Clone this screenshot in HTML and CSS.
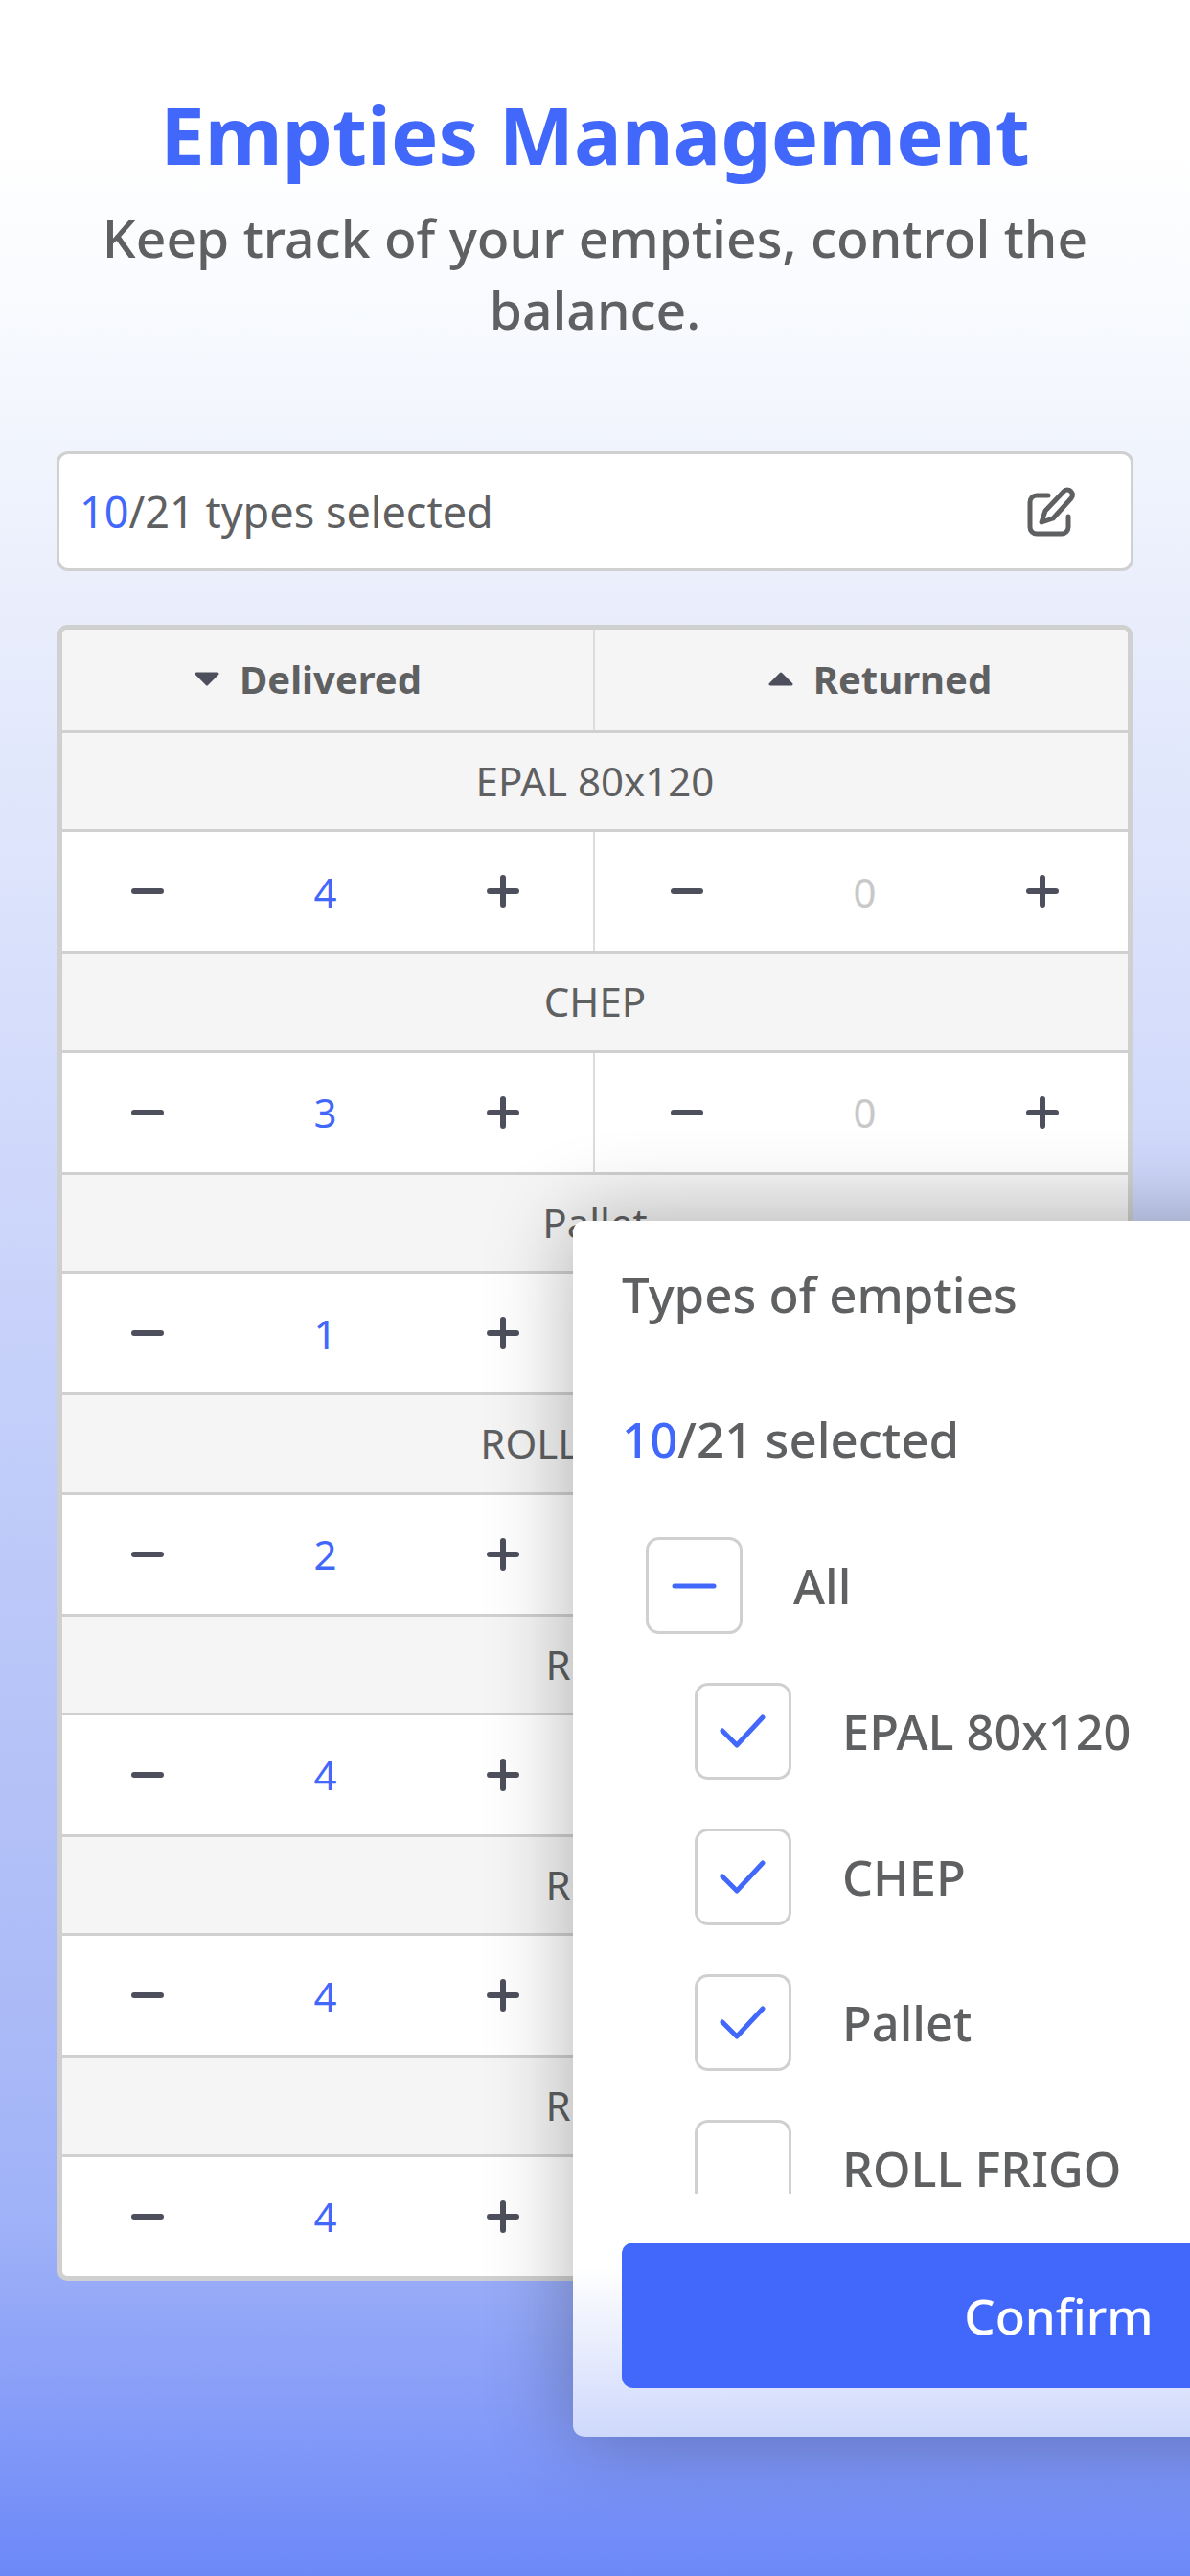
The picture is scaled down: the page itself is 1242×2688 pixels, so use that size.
FILE: index.html
```html
<!DOCTYPE html>
<html lang="en">
<head>
    <meta charset="UTF-8">
    <meta name="viewport" content="width=device-width, initial-scale=1.0">
    <title>Empties Management</title>
    <link rel="stylesheet" href="styles.css">
</head>
<body>

<svg class="icon-defs" width="0" height="0">
    <symbol id="minus" viewBox="0 0 40 40"><path d="M6 20H34" /></symbol>
    <symbol id="plus" viewBox="0 0 40 40"><path d="M6 20H34M20 6V34" /></symbol>
</svg>

<div class="page">
    <h1 class="title">Empties Management</h1>
    <p class="subtitle">Keep track of your empties, control the balance.</p>

    <div class="types-bar">
        <span><span class="blue">10</span>/21 types selected</span>
        <svg class="edit-icon" viewBox="0 0 56 56">
            <path d="M22 11H10a7 7 0 0 0-7 7V44a7 7 0 0 0 7 7H36a7 7 0 0 0 7-7V33" />
            <path d="M15 39L19 27L38 7a5 5 0 0 1 8 0a5 5 0 0 1 0 7L27 35Z" />
        </svg>
    </div>

    <div class="balance-table">
        <div class="row head-row">
            <div class="head-cell delivered"><svg class="sort-icon" viewBox="0 0 26 15"><path d="M2 2H24L13 13Z" /></svg>Delivered</div>
            <div class="head-cell returned"><svg class="sort-icon" viewBox="0 0 26 15"><path d="M2 13H24L13 2Z" /></svg>Returned</div>
        </div>

        <div class="name-row">EPAL 80x120</div>
        <div class="row value-row">
            <div class="stepper">
                <svg class="step-icon"><use href="#minus" /></svg><span class="count">4</span><svg class="step-icon"><use href="#plus" /></svg>
            </div>
            <div class="stepper">
                <svg class="step-icon"><use href="#minus" /></svg><span class="count zero">0</span><svg class="step-icon"><use href="#plus" /></svg>
            </div>
        </div>

        <div class="name-row">CHEP</div>
        <div class="row value-row">
            <div class="stepper">
                <svg class="step-icon"><use href="#minus" /></svg><span class="count">3</span><svg class="step-icon"><use href="#plus" /></svg>
            </div>
            <div class="stepper">
                <svg class="step-icon"><use href="#minus" /></svg><span class="count zero">0</span><svg class="step-icon"><use href="#plus" /></svg>
            </div>
        </div>

        <div class="name-row">Pallet</div>
        <div class="row value-row">
            <div class="stepper">
                <svg class="step-icon"><use href="#minus" /></svg><span class="count">1</span><svg class="step-icon"><use href="#plus" /></svg>
            </div>
            <div class="stepper">
                <svg class="step-icon"><use href="#minus" /></svg><span class="count zero">0</span><svg class="step-icon"><use href="#plus" /></svg>
            </div>
        </div>

        <div class="name-row">ROLL FRIGO</div>
        <div class="row value-row">
            <div class="stepper">
                <svg class="step-icon"><use href="#minus" /></svg><span class="count">2</span><svg class="step-icon"><use href="#plus" /></svg>
            </div>
            <div class="stepper">
                <svg class="step-icon"><use href="#minus" /></svg><span class="count zero">0</span><svg class="step-icon"><use href="#plus" /></svg>
            </div>
        </div>

        <div class="name-row">ROLL</div>
        <div class="row value-row">
            <div class="stepper">
                <svg class="step-icon"><use href="#minus" /></svg><span class="count">4</span><svg class="step-icon"><use href="#plus" /></svg>
            </div>
            <div class="stepper">
                <svg class="step-icon"><use href="#minus" /></svg><span class="count zero">0</span><svg class="step-icon"><use href="#plus" /></svg>
            </div>
        </div>

        <div class="name-row">ROLL</div>
        <div class="row value-row">
            <div class="stepper">
                <svg class="step-icon"><use href="#minus" /></svg><span class="count">4</span><svg class="step-icon"><use href="#plus" /></svg>
            </div>
            <div class="stepper">
                <svg class="step-icon"><use href="#minus" /></svg><span class="count zero">0</span><svg class="step-icon"><use href="#plus" /></svg>
            </div>
        </div>

        <div class="name-row">ROLL</div>
        <div class="row value-row last-row">
            <div class="stepper">
                <svg class="step-icon"><use href="#minus" /></svg><span class="count">4</span><svg class="step-icon"><use href="#plus" /></svg>
            </div>
            <div class="stepper">
                <svg class="step-icon"><use href="#minus" /></svg><span class="count zero">0</span><svg class="step-icon"><use href="#plus" /></svg>
            </div>
        </div>
    </div>

    <!-- Popup runs off the right edge of the screen -->
    <div class="types-popup">
        <div class="popup-title">Types of empties</div>
        <div class="popup-count"><span class="blue">10</span>/21 selected</div>

        <div class="type-list">
            <div class="type-item">
                <span class="checkbox"><svg viewBox="0 0 95 95"><path d="M27 48H68" /></svg></span>All
            </div>
            <div class="type-item child">
                <span class="checkbox"><svg viewBox="0 0 95 95"><path d="M26 47L41 62L68 33" /></svg></span>EPAL 80x120
            </div>
            <div class="type-item child">
                <span class="checkbox"><svg viewBox="0 0 95 95"><path d="M26 47L41 62L68 33" /></svg></span>CHEP
            </div>
            <div class="type-item child">
                <span class="checkbox"><svg viewBox="0 0 95 95"><path d="M26 47L41 62L68 33" /></svg></span>Pallet
            </div>
            <div class="type-item child">
                <span class="checkbox"></span>ROLL FRIGO
            </div>
        </div>

        <button type="button" class="confirm-btn">Confirm</button>
    </div>
</div>

</body>
</html>
```

FILE: styles.css
```css
/* Page */
body {
    margin: 0;
    font-family: "Noto Sans", sans-serif;
    color: #5f6062;
}
.icon-defs {
    position: absolute;
}
.page {
    position: relative;
    width: 1242px;
    height: 2688px;
    box-sizing: border-box;
    padding: 91px 60px 0;
    overflow: hidden;
    background: linear-gradient(#ffffff 150px, #f9fbfe 300px, #e7ecfc 686px, #d7dffb 1029px, #c8d2fa 1371px, #b9c6f8 1714px, #adbcf7 2057px, #a0b2f8 2314px, #8aa0f8 2486px, #6c88f8 2688px);
}
.blue {
    color: #4268fb;
}

/* Heading */
.title {
    margin: 0;
    font-size: 83px;
    line-height: 98px;
    font-weight: 700;
    color: #4268fb;
    text-align: center;
}
.subtitle {
    margin: 21px -10px 0;
    font-size: 55.2px;
    font-weight: 500;
    line-height: 75px;
    text-align: center;
}

/* Selected types bar */
.types-bar {
    display: flex;
    justify-content: space-between;
    align-items: center;
    height: 125px;
    box-sizing: border-box;
    margin: 111px -1px 56px;
    padding: 0 52px 0 21px;
    font-size: 45px;
    background-color: white;
    border: 3px solid #d0d0d0;
    border-radius: 12px;
}
.edit-icon {
    width: 56px;
    height: 56px;
    fill: none;
    stroke: #5f6062;
    stroke-width: 5;
    stroke-linecap: round;
    stroke-linejoin: round;
}

/* Table */
.balance-table {
    border: 5px solid #d0d0d0;
    border-radius: 10px;
    background-color: white;
    overflow: hidden;
}
.row {
    display: grid;
    grid-template-columns: 1fr 1fr;
}
.head-row {
    height: 105px;
    background-color: #f5f5f5;
    border-bottom: 3px solid #d0d0d0;
}
.head-cell {
    display: flex;
    justify-content: center;
    align-items: center;
    gap: 21px;
    font-size: 40px;
    font-weight: 700;
    padding-bottom: 2px;
}
.delivered {
    padding-right: 41px;
    border-right: 2px solid #dcdcdc;
}
.returned {
    padding-left: 39px;
}
.sort-icon {
    width: 26px;
    height: 15px;
    fill: #4d4f5c;
    stroke: #4d4f5c;
    stroke-width: 3;
    stroke-linejoin: round;
}
.name-row {
    height: 100.4px;
    line-height: 100px;
    text-align: center;
    font-size: 42px;
    background-color: #f5f5f5;
    border-bottom: 3px solid #d0d0d0;
}
.value-row {
    height: 124px;
    border-bottom: 3px solid #d0d0d0;
}
.last-row {
    border-bottom: none;
}
.stepper {
    display: flex;
    justify-content: space-between;
    align-items: center;
    padding: 0 69px 0 76px;
}
.stepper:first-child {
    padding: 0 74px 0 69px;
    border-right: 2px solid #dcdcdc;
}
.step-icon {
    width: 40px;
    height: 40px;
    fill: none;
    stroke: #4d4f5c;
    stroke-width: 6;
    stroke-linecap: round;
}
.count {
    font-size: 42px;
    color: #4268fb;
}
.zero {
    color: #c8c8c8;
}

/* Popup */
.types-popup {
    position: absolute;
    top: 1274px;
    left: 598px;
    width: 1014px;
    box-sizing: border-box;
    padding: 41px 51px 51px;
    border-radius: 12px;
    background: linear-gradient(#ffffff 86%, #ced8fb 100%);
    box-shadow: 0 0 90px rgba(0, 0, 0, 0.3);
}
.popup-title,
.popup-count {
    font-size: 51px;
    font-weight: 500;
    line-height: 70px;
}
.popup-count {
    margin-top: 81px;
}
.type-list {
    display: flex;
    flex-direction: column;
    gap: 51px;
    height: 685px;
    margin-top: 68px;
    overflow: hidden;
    font-size: 50.5px;
    font-weight: 500;
}
.type-item {
    display: flex;
    align-items: center;
    gap: 53px;
    margin-left: 25px;
}
.child {
    margin-left: 76px;
}
.checkbox {
    flex: none;
    width: 101px;
    height: 101px;
    box-sizing: border-box;
    border: 3px solid #d0d0d0;
    border-radius: 14px;
}
.checkbox svg {
    display: block;
    fill: none;
    stroke: #4268fb;
    stroke-width: 5;
    stroke-linecap: round;
    stroke-linejoin: round;
}
.confirm-btn {
    display: block;
    width: 100%;
    height: 152px;
    margin-top: 51px;
    border: none;
    border-radius: 12px;
    background-color: #4268fb;
    color: white;
    font-family: inherit;
    font-size: 51px;
    font-weight: 500;
}
```
